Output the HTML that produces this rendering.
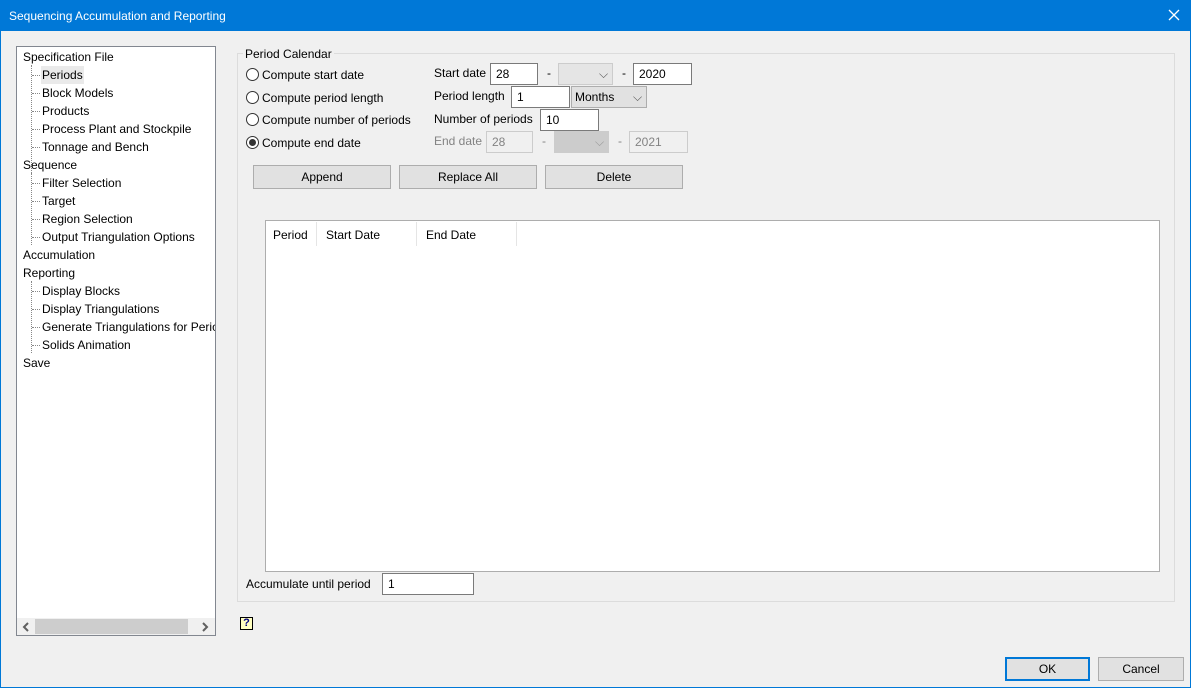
<!DOCTYPE html>
<html><head><style>
*{box-sizing:border-box;margin:0;padding:0}
body{width:1191px;height:688px;background:#f0f0f0;font-family:"Liberation Sans",sans-serif;font-size:12px;color:#000;position:relative;overflow:hidden}
.a{position:absolute;white-space:nowrap}
.win{position:absolute;left:0;top:0;width:1191px;height:688px;border:1px solid #0078d7;border-top:none}
.title{position:absolute;left:0;top:0;width:1191px;height:31px;background:#0078d7;color:#fff}
.in{position:absolute;background:#fff;border:1px solid #7a7a7a;padding:3px 0 0 5px;height:22px}
.dis{background:#f0f0f0;border-color:#ccc;color:#838383}
.cb{position:absolute;background:#e1e1e1;border:1px solid #adadad;height:22px;padding:3px 0 0 3px}
.btn{position:absolute;background:#e1e1e1;border:1px solid #adadad;height:24px;text-align:center;line-height:22px}
.rad{position:absolute;width:13px;height:13px;border:1px solid #333;border-radius:50%;background:#fff}
.tree .a{line-height:18px}
.dot{position:absolute;border-top:1px dotted #888;width:8px}
</style></head><body>
<div class="title"><span class="a" style="left:9px;top:9px;font-size:12px">Sequencing Accumulation and Reporting</span>
<svg class="a" style="left:1168px;top:9px" width="12" height="12"><path d="M1 1L11 11M11 1L1 11" stroke="#fff" stroke-width="1.3"/></svg></div>
<div class="win"></div>

<div class="a tree" style="left:16px;top:46px;width:200px;height:590px;background:#fff;border:1px solid #828790">
<div class="a" style="left:14px;top:18px;height:126px;border-left:1px dotted #888"></div>
<div class="a" style="left:14px;top:126px;height:72px;border-left:1px dotted #888"></div>
<div class="a" style="left:14px;top:234px;height:72px;border-left:1px dotted #888"></div>
<span class="a" style="left:6px;top:1px">Specification File</span>
<div class="a" style="left:24px;top:19px;width:43px;height:18px;background:#eaeaea"></div>
<span class="a" style="left:25px;top:19px">Periods</span>
<span class="a" style="left:25px;top:37px">Block Models</span>
<span class="a" style="left:25px;top:55px">Products</span>
<span class="a" style="left:25px;top:73px">Process Plant and Stockpile</span>
<span class="a" style="left:25px;top:91px">Tonnage and Bench</span>
<span class="a" style="left:6px;top:109px">Sequence</span>
<span class="a" style="left:25px;top:127px">Filter Selection</span>
<span class="a" style="left:25px;top:145px">Target</span>
<span class="a" style="left:25px;top:163px">Region Selection</span>
<span class="a" style="left:25px;top:181px">Output Triangulation Options</span>
<span class="a" style="left:6px;top:199px">Accumulation</span>
<span class="a" style="left:6px;top:217px">Reporting</span>
<span class="a" style="left:25px;top:235px">Display Blocks</span>
<span class="a" style="left:25px;top:253px">Display Triangulations</span>
<span class="a" style="left:25px;top:271px;width:173px;overflow:hidden">Generate Triangulations for Periods</span>
<span class="a" style="left:25px;top:289px">Solids Animation</span>
<span class="a" style="left:6px;top:307px">Save</span>
<div class="dot" style="left:15px;top:28px"></div><div class="dot" style="left:15px;top:46px"></div><div class="dot" style="left:15px;top:64px"></div><div class="dot" style="left:15px;top:82px"></div><div class="dot" style="left:15px;top:100px"></div>
<div class="dot" style="left:15px;top:136px"></div><div class="dot" style="left:15px;top:154px"></div><div class="dot" style="left:15px;top:172px"></div><div class="dot" style="left:15px;top:190px"></div>
<div class="dot" style="left:15px;top:244px"></div><div class="dot" style="left:15px;top:262px"></div><div class="dot" style="left:15px;top:280px"></div><div class="dot" style="left:15px;top:298px"></div>
<div class="a" style="left:0;top:571px;width:198px;height:17px;background:#f0f0f0"></div>
<div class="a" style="left:18px;top:572px;width:153px;height:15px;background:#cdcdcd"></div>
<svg class="a" style="left:5px;top:575px" width="8" height="10"><path d="M6 1L2 5L6 9" stroke="#606060" stroke-width="2" fill="none"/></svg>
<svg class="a" style="left:184px;top:575px" width="8" height="10"><path d="M2 1L6 5L2 9" stroke="#606060" stroke-width="2" fill="none"/></svg>
</div>

<div class="a" style="left:237px;top:53px;width:938px;height:549px;border:1px solid #dcdcdc"></div>
<span class="a" style="left:243px;top:47px;background:#f0f0f0;padding:0 2px">Period Calendar</span>

<div class="rad" style="left:246px;top:68px"></div><span class="a" style="left:262px;top:68px">Compute start date</span>
<div class="rad" style="left:246px;top:91px"></div><span class="a" style="left:262px;top:91px">Compute period length</span>
<div class="rad" style="left:246px;top:113px"></div><span class="a" style="left:262px;top:113px">Compute number of periods</span>
<div class="rad" style="left:246px;top:136px"></div><div class="a" style="left:249px;top:139px;width:7px;height:7px;border-radius:50%;background:#333"></div><span class="a" style="left:262px;top:136px">Compute end date</span>

<span class="a" style="left:434px;top:66px">Start date</span>
<div class="in" style="left:490px;top:63px;width:48px">28</div>
<span class="a" style="left:547px;top:66px">-</span>
<div class="cb" style="left:558px;top:63px;width:55px;border-color:#ccc;background:#e5e5e5"><span class="a" style="left:40px;top:3px;color:#555">⌵</span></div>
<span class="a" style="left:622px;top:66px">-</span>
<div class="in" style="left:633px;top:63px;width:59px">2020</div>

<span class="a" style="left:434px;top:89px">Period length</span>
<div class="in" style="left:511px;top:86px;width:59px">1</div>
<div class="cb" style="left:571px;top:86px;width:76px">Months<span class="a" style="left:61px;top:3px;color:#555">⌵</span></div>

<span class="a" style="left:434px;top:112px">Number of periods</span>
<div class="in" style="left:540px;top:109px;width:59px">10</div>

<span class="a" style="left:434px;top:134px;color:#838383">End date</span>
<div class="in dis" style="left:486px;top:131px;width:47px">28</div>
<span class="a" style="left:542px;top:134px;color:#838383">-</span>
<div class="cb" style="left:554px;top:131px;width:55px;background:#ccc;border-color:#ccc"><span class="a" style="left:40px;top:3px;color:#999">⌵</span></div>
<span class="a" style="left:618px;top:134px;color:#838383">-</span>
<div class="in dis" style="left:629px;top:131px;width:59px">2021</div>

<div class="btn" style="left:253px;top:165px;width:138px">Append</div>
<div class="btn" style="left:399px;top:165px;width:138px">Replace All</div>
<div class="btn" style="left:545px;top:165px;width:138px">Delete</div>

<div class="a" style="left:265px;top:220px;width:895px;height:352px;background:#fff;border:1px solid #adadad">
<span class="a" style="left:7px;top:7px">Period</span>
<span class="a" style="left:60px;top:7px">Start Date</span>
<span class="a" style="left:160px;top:7px">End Date</span>
<div class="a" style="left:50px;top:1px;width:1px;height:24px;background:#e5e5e5"></div>
<div class="a" style="left:150px;top:1px;width:1px;height:24px;background:#e5e5e5"></div>
<div class="a" style="left:250px;top:1px;width:1px;height:24px;background:#e5e5e5"></div>
</div>

<span class="a" style="left:246px;top:577px">Accumulate until period</span>
<div class="in" style="left:382px;top:573px;width:92px">1</div>

<div class="a" style="left:240px;top:617px;width:13px;height:13px;background:#ffffc0;border:1px solid #000;font-size:11px;font-weight:bold;color:#000080;text-align:center;line-height:11px">?</div>

<div class="btn" style="left:1005px;top:657px;width:85px;border:2px solid #0078d7;line-height:20px">OK</div>
<div class="btn" style="left:1098px;top:657px;width:86px">Cancel</div>
</body></html>
